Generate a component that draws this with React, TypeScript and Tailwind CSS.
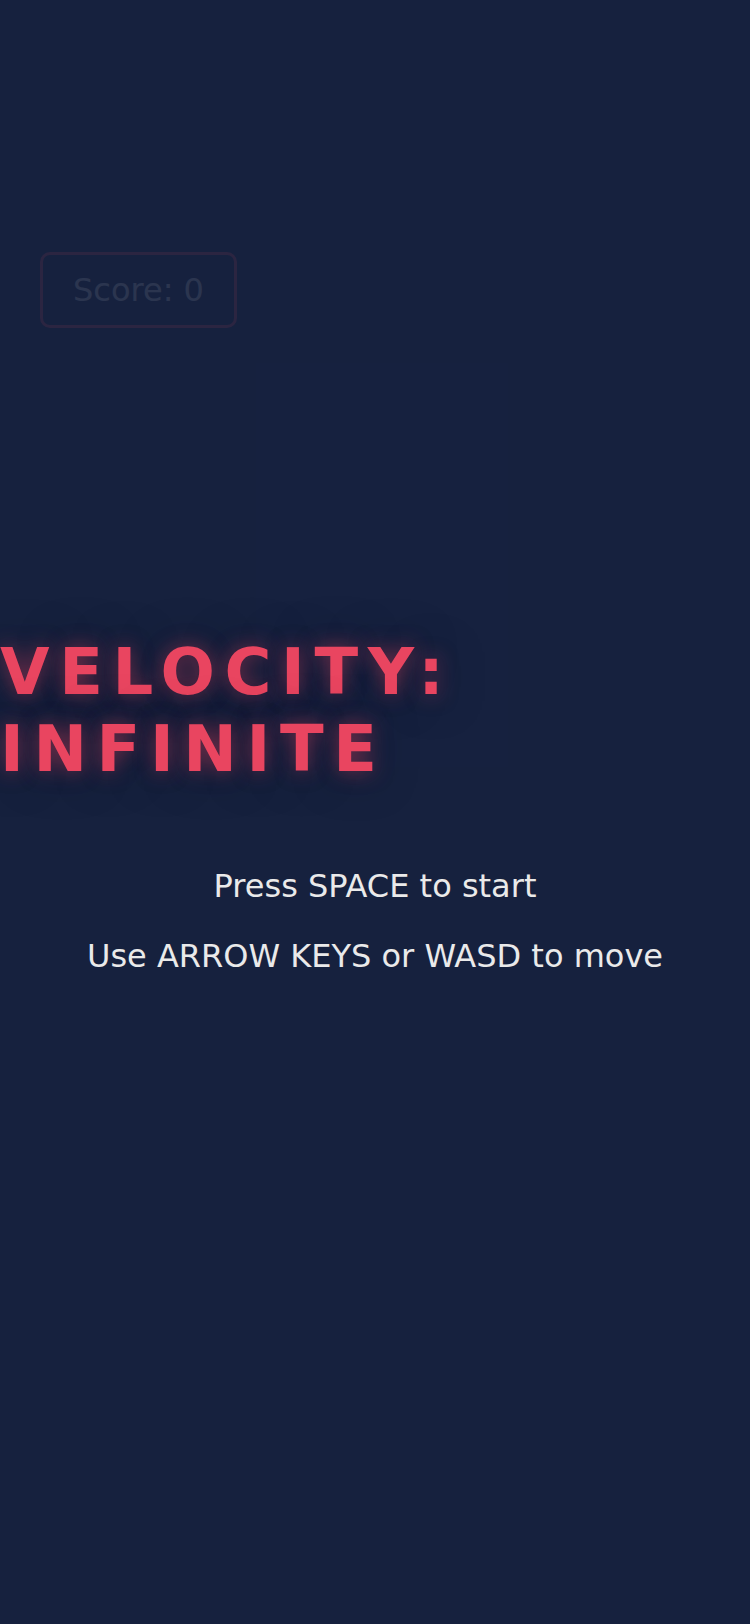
import React from 'react';

const ScoreBox: React.FC<{ score: number }> = ({ score }) => (
  <div className="inline-block rounded-[10px] border-[3px] border-[#e94560] px-[30px] py-[11px] text-[32px] leading-[48px] text-[#eaeaea]">
    Score: {score}
  </div>
);

export default function App() {
  return (
    <div className="relative h-[1624px] w-full overflow-hidden bg-[#16213e] font-['DejaVu_Sans',sans-serif]">
      {/* game layer, dimmed by the start overlay */}
      <div className="pl-10 pt-[252px]">
        <ScoreBox score={0} />
      </div>
      <div className="ml-[256px] mt-[35px] h-[404px] w-[252px] bg-[#1b274a]" />

      {/* start overlay */}
      <div className="absolute inset-0 flex flex-col bg-[#16213e]/90">
        <h1 className="mt-[634px] text-[64px] font-bold leading-[1.2] tracking-[0.15em] text-[#e94560] [text-shadow:0_0_20px_rgba(233,69,96,0.5),0_0_44px_rgba(10,12,35,0.6)]">
          VELOCITY: INFINITE
        </h1>
        <p className="mt-[74px] text-center text-[32px] leading-[48px] text-[#eaeaea]">Press SPACE to start</p>
        <p className="mt-[22px] text-center text-[32px] leading-[48px] text-[#eaeaea]">Use ARROW KEYS or WASD to move</p>
      </div>
    </div>
  );
}
